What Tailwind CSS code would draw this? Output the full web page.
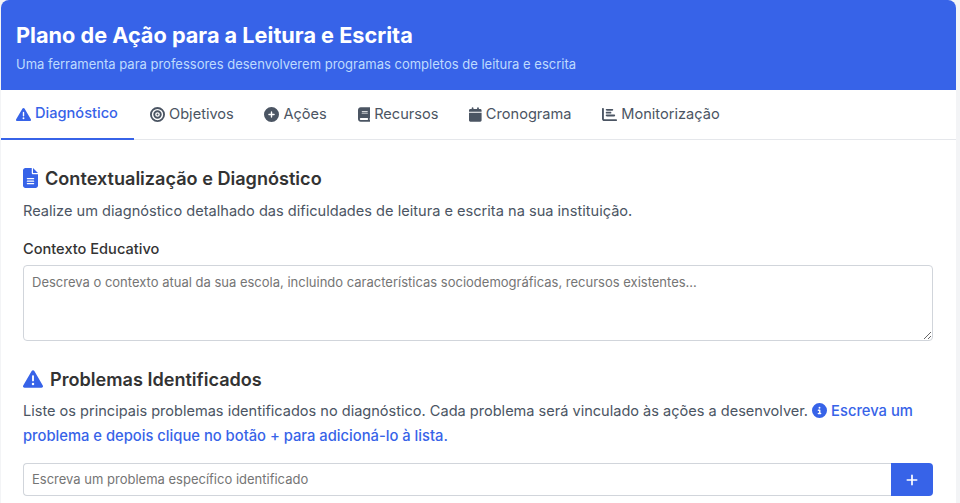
<!DOCTYPE html>
<html lang="pt">
<head>
  <meta charset="UTF-8" />
  <title>Plano de Ação para a Leitura e Escrita</title>
  <script src="https://cdn.jsdelivr.net/npm/@tailwindcss/browser@4"></script>
</head>
<body class="bg-[#f3f4f6] h-[503px] overflow-hidden font-['Inter',sans-serif]">
  <div class="w-[955px] h-[503px] bg-white rounded-t-lg overflow-hidden ml-px">

    <!-- Header -->
    <header class="bg-[#3763e8] h-[90px] px-[15px] pt-[21px]">
      <h1 class="text-[21.7px] leading-[28px] font-bold text-white">Plano de Ação para a Leitura e Escrita</h1>
      <p class="mt-[5px] text-[13px] leading-[20px] text-[#bfdbfe]">Uma ferramenta para professores desenvolverem programas completos de leitura e escrita</p>
    </header>

    <!-- Tabs -->
    <nav class="flex h-[50px] border-b border-[#e5e7eb] text-[14.6px] text-[#4b5563]">
      <a class="flex items-center gap-[4px] pl-[15px] w-[133px] h-[50px] border-b-2 border-[#3763e8] font-medium text-[#3763e8]">
        <svg class="w-[15px] h-[15px]" viewBox="0 0 512 512" fill="currentColor"><path d="M256 32c14.2 0 27.3 7.5 34.5 19.8l216 368c7.3 12.4 7.3 27.7 .2 40.1S486.3 480 472 480H40c-14.3 0-27.6-7.7-34.7-20.1s-7-27.8 .2-40.1l216-368C228.7 39.5 241.8 32 256 32zm0 128c-13.3 0-24 10.7-24 24V296c0 13.3 10.7 24 24 24s24-10.7 24-24V184c0-13.3-10.7-24-24-24zm32 224a32 32 0 1 0 -64 0 32 32 0 1 0 64 0z"/></svg>
        Diagnóstico
      </a>
      <a class="flex items-center gap-[4px] pl-[16px] pr-[15.2px]">
        <svg class="w-[15px] h-[15px]" viewBox="0 0 512 512" fill="currentColor"><path d="M448 256A192 192 0 1 0 64 256a192 192 0 1 0 384 0zM0 256a256 256 0 1 1 512 0A256 256 0 1 1 0 256zm256 80a80 80 0 1 0 0-160 80 80 0 1 0 0 160zm0-224a144 144 0 1 1 0 288 144 144 0 1 1 0-288zM224 256a32 32 0 1 1 64 0 32 32 0 1 1 -64 0z"/></svg>
        Objetivos
      </a>
      <a class="flex items-center gap-[4px] px-[15.4px]">
        <svg class="w-[15px] h-[15px]" viewBox="0 0 512 512" fill="currentColor"><path d="M256 512A256 256 0 1 0 256 0a256 256 0 1 0 0 512zM232 344V280H168c-13.3 0-24-10.7-24-24s10.7-24 24-24h64V168c0-13.3 10.7-24 24-24s24 10.7 24 24v64h64c13.3 0 24 10.7 24 24s-10.7 24-24 24H280v64c0 13.3-10.7 24-24 24s-24-10.7-24-24z"/></svg>
        Ações
      </a>
      <a class="flex items-center gap-[4px] px-[15.4px]">
        <svg class="w-[12.6px] h-[15px]" viewBox="0 0 448 512" fill="currentColor"><path d="M96 0C43 0 0 43 0 96V416c0 53 43 96 96 96H384h32c17.7 0 32-14.3 32-32s-14.3-32-32-32V384c17.7 0 32-14.3 32-32V32c0-17.7-14.3-32-32-32H384 96zm0 384H352v64H96c-17.7 0-32-14.3-32-32s14.3-32 32-32zm32-240c0-8.8 7.2-16 16-16H336c8.8 0 16 7.2 16 16s-7.2 16-16 16H144c-8.8 0-16-7.2-16-16zm16 48H336c8.8 0 16 7.2 16 16s-7.2 16-16 16H144c-8.8 0-16-7.2-16-16s7.2-16 16-16z"/></svg>
        Recursos
      </a>
      <a class="flex items-center gap-[4px] px-[15.4px]">
        <svg class="w-[12.6px] h-[15px]" viewBox="0 0 448 512" fill="currentColor"><path d="M96 32V64H48C21.5 64 0 85.5 0 112v48H448V112c0-26.5-21.5-48-48-48H352V32c0-17.7-14.3-32-32-32s-32 14.3-32 32V64H160V32c0-17.7-14.3-32-32-32S96 14.3 96 32zM448 192H0V464c0 26.5 21.5 48 48 48H400c26.5 0 48-21.5 48-48V192z"/></svg>
        Cronograma
      </a>
      <a class="flex items-center gap-[4px] px-[15.4px]">
        <svg class="w-[15px] h-[15px]" viewBox="0 0 512 512" fill="currentColor"><path d="M32 32c17.7 0 32 14.3 32 32V400c0 8.8 7.2 16 16 16H480c17.7 0 32 14.3 32 32s-14.3 32-32 32H80c-44.2 0-80-35.8-80-80V64C0 46.3 14.3 32 32 32zm96 64c0-17.7 14.3-32 32-32H352c17.7 0 32 14.3 32 32s-14.3 32-32 32H160c-17.7 0-32-14.3-32-32zm32 64H288c17.7 0 32 14.3 32 32s-14.3 32-32 32H160c-17.7 0-32-14.3-32-32s14.3-32 32-32zm0 96H416c17.7 0 32 14.3 32 32s-14.3 32-32 32H160c-17.7 0-32-14.3-32-32s14.3-32 32-32z"/></svg>
        Monitorização
      </a>
    </nav>

    <!-- Content -->
    <main class="pl-[22px] pr-[23px] pt-[26px]">
      <h2 class="flex items-center gap-[7px] text-[18.1px] leading-[24px] font-semibold text-[#333]">
        <svg class="w-[15px] h-5 text-[#3763e8]" viewBox="0 0 384 512" fill="currentColor"><path d="M64 0C28.7 0 0 28.7 0 64V448c0 35.3 28.7 64 64 64H320c35.3 0 64-28.7 64-64V160H256c-17.7 0-32-14.3-32-32V0H64zM256 0V128H384L256 0zM112 256H272c8.8 0 16 7.2 16 16s-7.2 16-16 16H112c-8.8 0-16-7.2-16-16s7.2-16 16-16zm0 64H272c8.8 0 16 7.2 16 16s-7.2 16-16 16H112c-8.8 0-16-7.2-16-16s7.2-16 16-16zm0 64H272c8.8 0 16 7.2 16 16s-7.2 16-16 16H112c-8.8 0-16-7.2-16-16s7.2-16 16-16z"/></svg>
        Contextualização e Diagnóstico
      </h2>
      <p class="mt-[9px] text-[14.6px] leading-[24px] text-[#4b5563]">Realize um diagnóstico detalhado das dificuldades de leitura e escrita na sua instituição.</p>

      <label class="block mt-[14px] text-[14.6px] leading-[24px] font-medium text-[#333]">Contexto Educativo</label>
      <textarea rows="3" class="block w-full h-[76px] mt-[4px] px-[8px] py-[6px] text-[13px] leading-[20px] bg-white border border-[#d1d5db] rounded placeholder:text-[#757575]" placeholder="Descreva o contexto atual da sua escola, incluindo características sociodemográficas, recursos existentes..."></textarea>

      <h2 class="flex items-center gap-[7px] mt-[26px] text-[18.1px] leading-[24px] font-semibold text-[#333]">
        <svg class="w-5 h-5 text-[#3763e8]" viewBox="0 0 512 512" fill="currentColor"><path d="M256 32c14.2 0 27.3 7.5 34.5 19.8l216 368c7.3 12.4 7.3 27.7 .2 40.1S486.3 480 472 480H40c-14.3 0-27.6-7.7-34.7-20.1s-7-27.8 .2-40.1l216-368C228.7 39.5 241.8 32 256 32zm0 128c-13.3 0-24 10.7-24 24V296c0 13.3 10.7 24 24 24s24-10.7 24-24V184c0-13.3-10.7-24-24-24zm32 224a32 32 0 1 0 -64 0 32 32 0 1 0 64 0z"/></svg>
        Problemas Identificados
      </h2>
      <p class="mt-[8px] text-[14.55px] leading-[25px] text-[#4b5563]">
        Liste os principais problemas identificados no diagnóstico. Cada problema será vinculado às ações a desenvolver.
        <span class="text-[14.75px] font-medium text-[#3763e8]"><svg class="inline-block w-[15px] h-[15px] align-[-2px]" viewBox="0 0 512 512" fill="currentColor"><path d="M256 512A256 256 0 1 0 256 0a256 256 0 1 0 0 512zM216 336h24V272H216c-13.3 0-24-10.7-24-24s10.7-24 24-24h48c13.3 0 24 10.7 24 24v88h8c13.3 0 24 10.7 24 24s-10.7 24-24 24H216c-13.3 0-24-10.7-24-24s10.7-24 24-24zm40-208a32 32 0 1 1 0 64 32 32 0 1 1 0-64z"/></svg> Escreva um problema e depois clique no botão + para adicioná-lo à lista.</span>
      </p>

      <div class="flex mt-[14px] h-[33px]">
        <input type="text" class="flex-1 px-[8px] text-[13px] bg-white border border-[#d1d5db] border-r-0 rounded-l placeholder:text-[#757575]" placeholder="Escreva um problema específico identificado" />
        <button class="w-[42px] bg-[#3763e8] rounded-r flex items-center justify-center text-white">
          <svg class="w-[12px] h-[14px]" viewBox="0 0 448 512" fill="currentColor"><path d="M256 80c0-17.7-14.3-32-32-32s-32 14.3-32 32V224H48c-17.7 0-32 14.3-32 32s14.3 32 32 32H192V432c0 17.7 14.3 32 32 32s32-14.3 32-32V288H400c17.7 0 32-14.3 32-32s-14.3-32-32-32H256V80z"/></svg>
        </button>
      </div>
    </main>
  </div>
</body>
</html>
